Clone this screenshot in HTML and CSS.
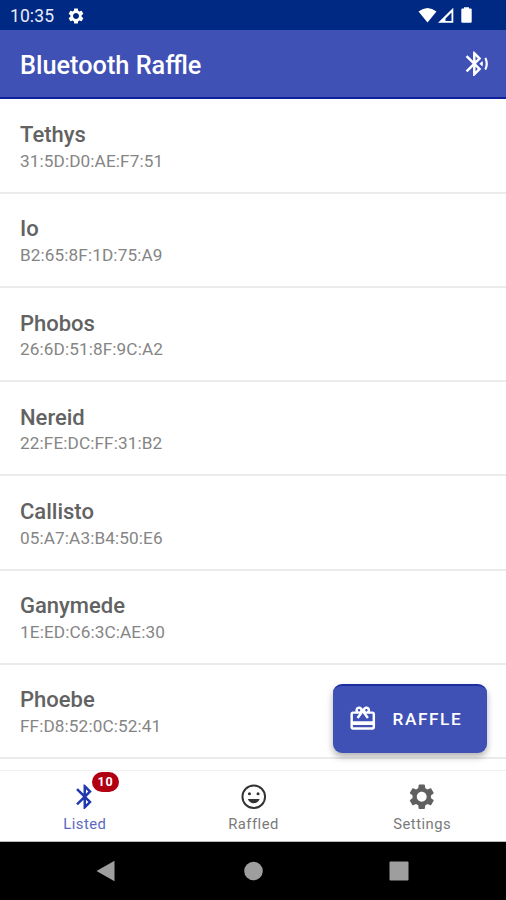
FILE: index.html
```html
<!DOCTYPE html>
<html lang="en">
<head>
<meta charset="utf-8">
<title>Bluetooth Raffle</title>
<link rel="stylesheet" href="styles.css">
</head>
<body>
<svg class="defs" aria-hidden="true">
  <symbol id="gear" viewBox="0 0 24 24"><path d="M19.43 12.98c.04-.32.07-.64.07-.98s-.03-.66-.07-.98l2.11-1.65c.19-.15.24-.42.12-.64l-2-3.46c-.12-.22-.39-.3-.61-.22l-2.49 1c-.52-.4-1.08-.73-1.69-.98l-.38-2.65C14.46 2.18 14.25 2 14 2h-4c-.25 0-.46.18-.49.42l-.38 2.65c-.61.25-1.17.59-1.69.98l-2.49-1c-.23-.09-.49 0-.61.22l-2 3.46c-.13.22-.07.49.12.64l2.11 1.65c-.04.32-.07.65-.07.98s.03.66.07.98l-2.11 1.65c-.19.15-.24.42-.12.64l2 3.46c.12.22.39.3.61.22l2.49-1c.52.4 1.08.73 1.69.98l.38 2.65c.03.24.24.42.49.42h4c.25 0 .46-.18.49-.42l.38-2.65c.61-.25 1.17-.59 1.69-.98l2.49 1c.23.09.49 0 .61-.22l2-3.46c.12-.22.07-.49-.12-.64l-2.11-1.65zM12 16c-2.21 0-4-1.79-4-4s1.79-4 4-4 4 1.79 4 4-1.79 4-4 4z"/></symbol>
</svg>
<div class="screen">
  <header>
    <div class="status">
      <span class="time">10:35</span>
      <svg class="status-gear"><use href="#gear"/></svg>
      <svg class="indicators" viewBox="0 0 56 18"><path d="M.5 4.500Q9.500-2.500 18.500 4.500L9.500 15.500Z"/><path fill-rule="evenodd" d="M20 15.800 35.300 .8V15.800ZM27.500 14H33.500V5.500L27.500 11.500Z"/><path d="M46 1.500V.2h5v1.300h1.700q1 0 1 1v12.300q0 1-1 1h-8.400q-1 0-1-1V2.500q0-1 1-1Z"/></svg>
    </div>
    <div class="appbar">
      <h1>Bluetooth Raffle</h1>
      <svg class="icon" viewBox="0 0 24 24"><path d="M14.24 12.01l2.32 2.32c.28-.72.44-1.51.44-2.33 0-.82-.16-1.59-.43-2.31l-2.33 2.32zm5.29-5.3l-1.26 1.26c.63 1.21.98 2.57.98 4.02s-.36 2.82-.98 4.02l1.2 1.2c.97-1.54 1.54-3.36 1.54-5.31-.01-1.89-.55-3.67-1.48-5.19zm-3.82 1L10 2H9v7.59L4.41 5 3 6.41 8.59 12 3 17.59 4.41 19 9 14.41V22h1l5.71-5.71-4.3-4.29 4.3-4.29zM11 5.83l1.88 1.88L11 9.59V5.83zm1.88 10.46L11 18.17v-3.76l1.88 1.88z"/></svg>
    </div>
  </header>
  <main>
    <ul>
      <li><h2>Tethys</h2><p>31:5D:D0:AE:F7:51</p></li>
      <li><h2>Io</h2><p>B2:65:8F:1D:75:A9</p></li>
      <li><h2>Phobos</h2><p>26:6D:51:8F:9C:A2</p></li>
      <li><h2>Nereid</h2><p>22:FE:DC:FF:31:B2</p></li>
      <li><h2>Callisto</h2><p>05:A7:A3:B4:50:E6</p></li>
      <li><h2>Ganymede</h2><p>1E:ED:C6:3C:AE:30</p></li>
      <li><h2>Phoebe</h2><p>FF:D8:52:0C:52:41</p></li>
    </ul>
    <button class="fab">
      <svg class="icon" viewBox="0 0 24 24"><path d="M20 6h-2.18c.11-.31.18-.65.18-1 0-1.66-1.34-3-3-3-1.05 0-1.96.54-2.5 1.35l-.5.67-.5-.68C10.96 2.54 10.05 2 9 2 7.34 2 6 3.34 6 5c0 .35.07.69.18 1H4c-1.11 0-1.99.89-1.99 2L2 19c0 1.11.89 2 2 2h16c1.11 0 2-.89 2-2V8c0-1.11-.89-2-2-2zm-5-2c.55 0 1 .45 1 1s-.45 1-1 1-1-.45-1-1 .45-1 1-1zM9 4c.55 0 1 .45 1 1s-.45 1-1 1-1-.45-1-1 .45-1 1-1zm11 15H4v-2h16v2zm0-5H4V8h5.08L7 10.83 8.62 12 11 8.76l1-1.36 1 1.36L15.38 12 17 10.83 14.92 8H20v6z"/></svg>
      <span>RAFFLE</span>
    </button>
  </main>
  <nav class="tabs">
    <a class="tab active">
      <span class="tab-icon"><svg class="icon" viewBox="0 0 24 24"><path d="M17.71 7.71L12 2h-1v7.59L6.41 5 5 6.41 10.59 12 5 17.59 6.41 19 11 14.41V22h1l5.71-5.71-4.3-4.29 4.3-4.29zM13 5.83l1.88 1.88L13 9.59V5.83zm1.88 10.46L13 18.17v-3.76l1.88 1.88z"/></svg><b class="badge">10</b></span>
      <span class="label">Listed</span>
    </a>
    <a class="tab">
      <span class="tab-icon"><svg class="icon smile" viewBox="0 0 24 24"><circle class="ring" cx="12" cy="12" r="9.2"/><circle cx="8.5" cy="9.5" r="1.25"/><circle cx="15.5" cy="9.5" r="1.25"/><path d="M7.200 13.800h9.600c-.7 2.100-2.600 3.500-4.800 3.500s-4.100-1.400-4.800-3.500z"/></svg></span>
      <span class="label">Raffled</span>
    </a>
    <a class="tab">
      <span class="tab-icon"><svg class="icon"><use href="#gear"/></svg></span>
      <span class="label">Settings</span>
    </a>
  </nav>
  <footer>
    <span><svg viewBox="0 0 20 22"><path d="M17.5 .8V21.200L-.5 11Z"/></svg></span>
    <span><svg viewBox="0 0 20 22"><circle cx="10.500" cy="11" r="9.300"/></svg></span>
    <span><svg viewBox="0 0 20 22"><rect x=".5" y="1.500" width="19" height="19" rx="1"/></svg></span>
  </footer>
</div>
</body>
</html>
```
FILE: styles.css
```css
* { box-sizing: border-box; margin: 0; padding: 0; }
body { font-family: Roboto, "Liberation Sans", sans-serif; background: #fff; }
svg { display: block; fill: currentColor; }
.defs { position: absolute; width: 0; height: 0; }
.screen { width: 506px; height: 900px; display: flex; flex-direction: column; overflow: hidden; }
.icon { width: 29.5px; height: 29.5px; flex: none; }

.status { height: 30px; background: #002984; color: #fff; display: flex; align-items: center; padding: 2px 32px 0 10px; }
.time { font-size: 17.5px; letter-spacing: .1px; color: #e8ecf8; }
.status-gear { width: 18px; height: 18px; margin-left: 13px; }
.indicators { width: 56px; height: 18px; margin-left: auto; }
.appbar { height: 69px; background: #3f51b5; color: #fff; border-bottom: 2px solid #0d1f9c; display: flex; align-items: center; justify-content: space-between; padding: 0 15px 0 20px; }
h1 { font-size: 25.3px; font-weight: 500; line-height: 30px; padding-top: 4px; }

main { position: relative; height: 671px; flex: none; padding-top: .6px; }
li { list-style: none; height: 94.2px; border-bottom: 2px solid #ebebeb; padding: 21.6px 20px 0; }
h2 { font-size: 22px; font-weight: 500; line-height: 27px; color: #626262; }
li p { font-size: 17.2px; letter-spacing: .1px; line-height: 24px; color: #858585; margin-top: .6px; }
.fab { position: absolute; right: 19px; bottom: 17px; width: 154px; height: 69px; border: 0; border-top: 2px solid #1c2fa0; border-radius: 9px; background: #3f51b5; color: #fff; display: flex; align-items: center; padding: 0 0 2px 15px; gap: 15px; font: 500 17.2px Roboto, sans-serif; letter-spacing: 1.6px; box-shadow: 0 4px 7px rgba(0,0,0,.3); }

.tabs { height: 72px; flex: none; display: flex; border-top: 1px solid #f1f1f1; border-bottom: 1px solid #bbb; background: #fff; color: #606060; }
.tab { flex: 1; display: flex; flex-direction: column; align-items: center; padding: 11px 0 0 1px; }
.tab-icon { position: relative; }
.label { font-size: 14.8px; line-height: 18px; margin-top: 3px; letter-spacing: .5px; color: #7a7a7a; }
.active { color: #2038b0; }
.active .label { color: #5b68c0; }
.badge { position: absolute; left: 22px; top: -10px; width: 27px; height: 20px; border-radius: 10px; background: #b00012; color: #fff; font-size: 12.5px; line-height: 20px; text-align: center; letter-spacing: .8px; }
.smile { color: #333; }
.ring { fill: none; stroke: currentColor; stroke-width: 1.6; }

footer { height: 58px; flex: none; background: #000; color: #9e9e9e; display: flex; justify-content: center; align-items: center; gap: 126px; }
footer svg { width: 20px; height: 22px; overflow: visible; }
```
